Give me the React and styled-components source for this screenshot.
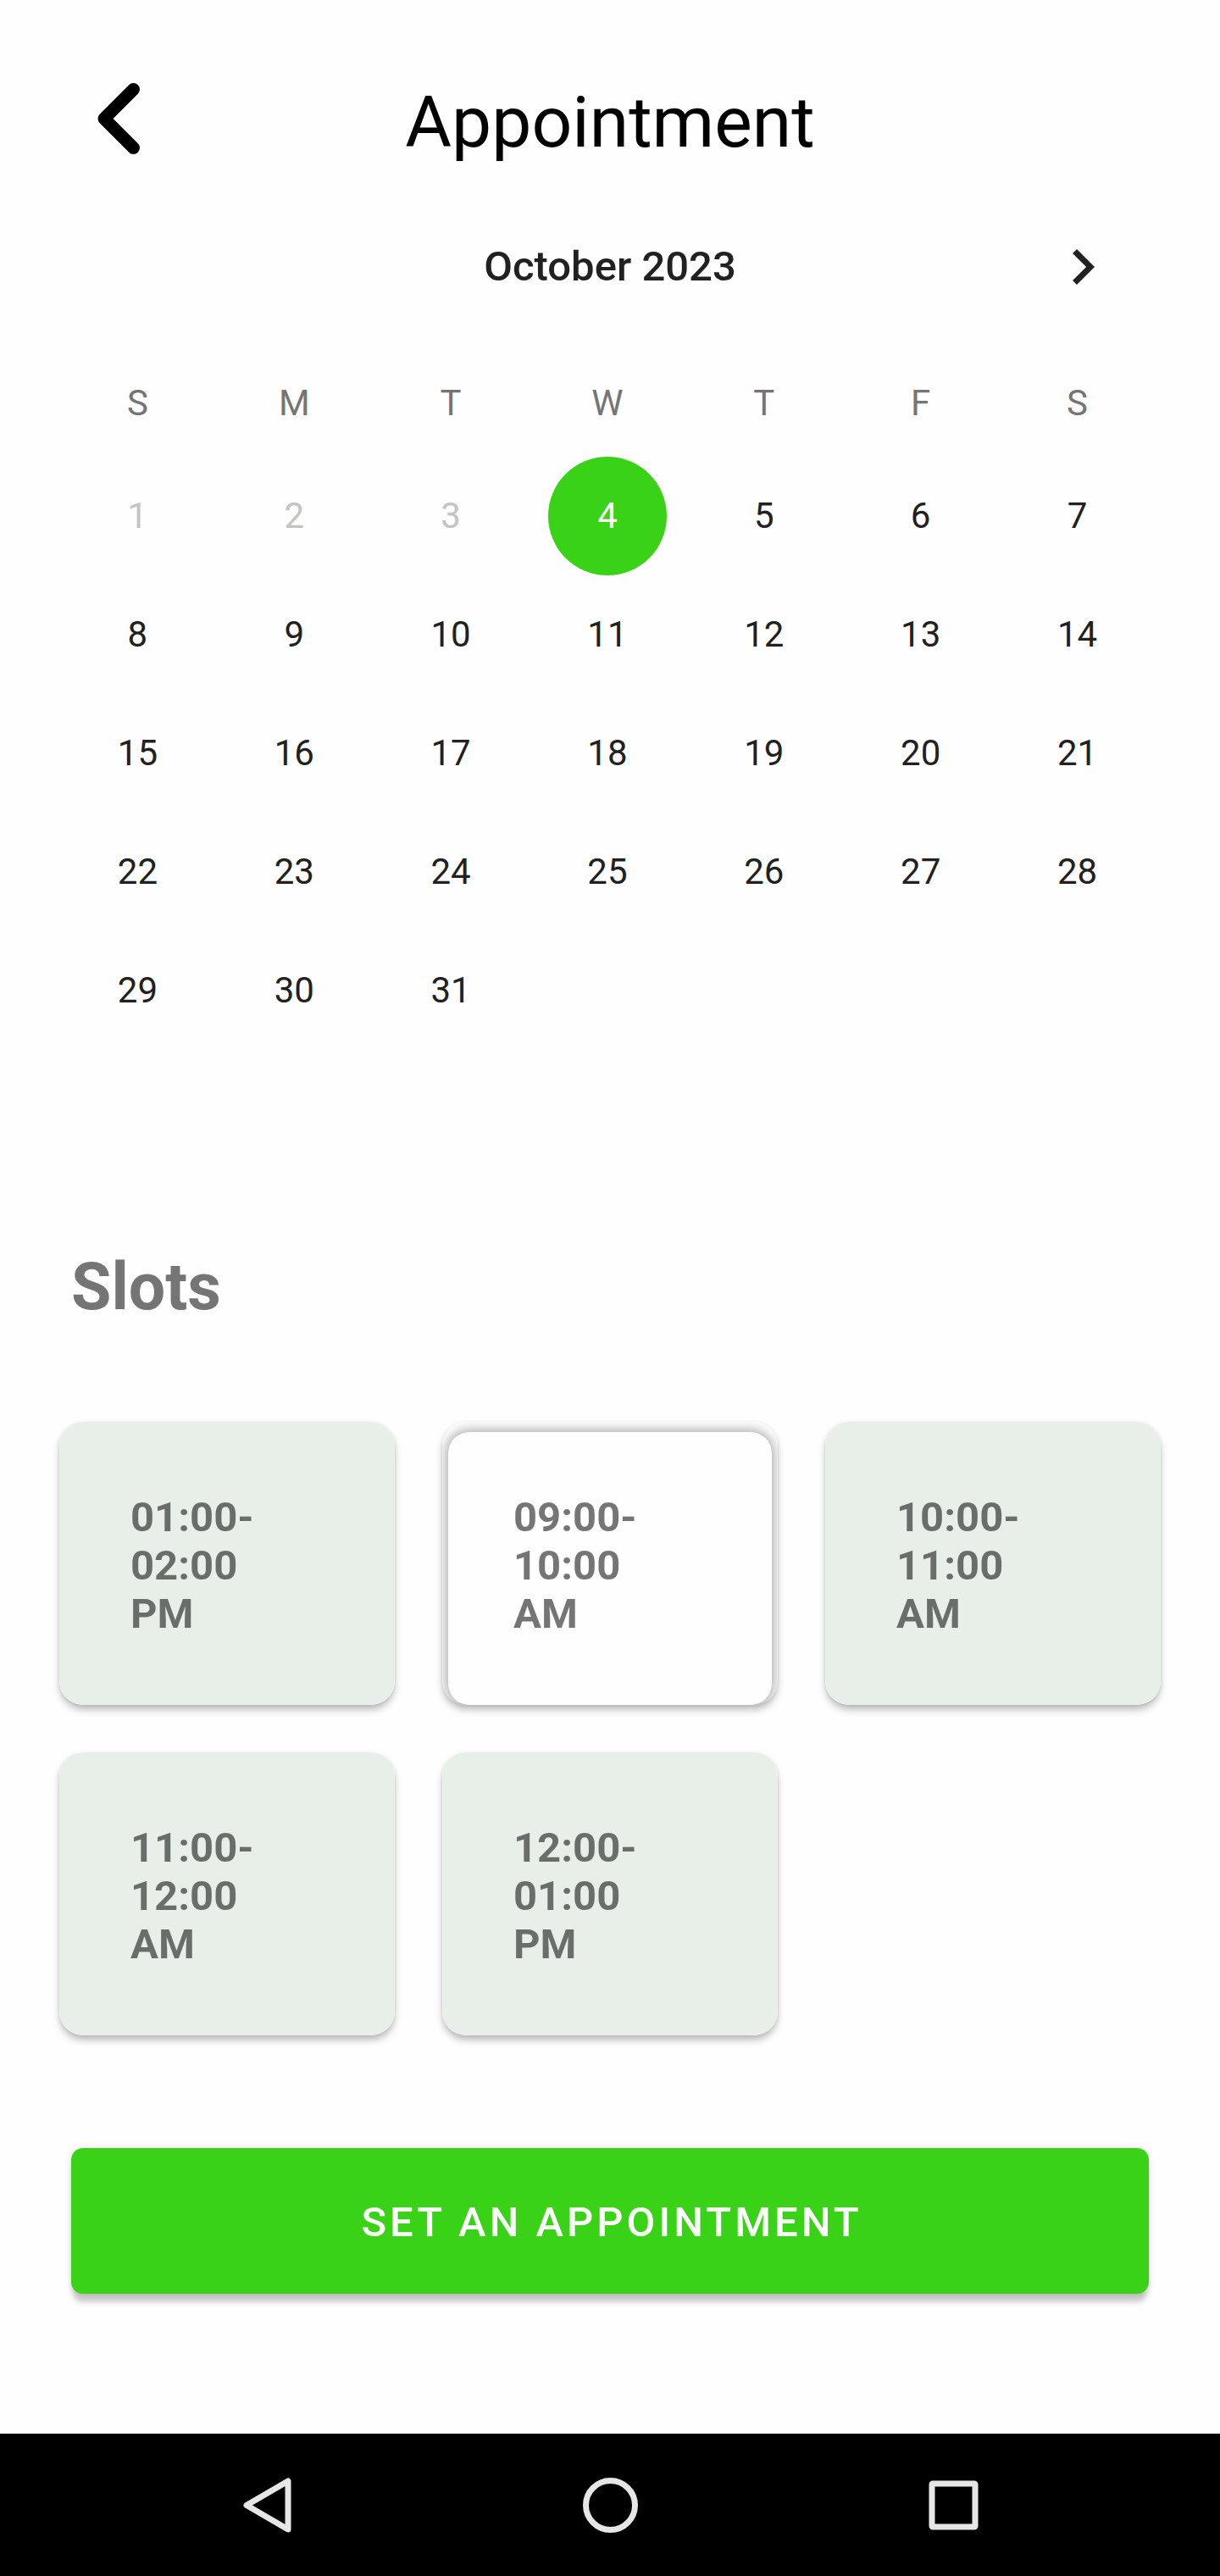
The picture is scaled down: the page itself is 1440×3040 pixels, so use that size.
import React, { useState } from "react";
import styled, { createGlobalStyle, css } from "styled-components";

const green = "#3ad216";
const ink = "#212121";
const muted = "rgba(0, 0, 0, 0.54)";

const GlobalStyle = createGlobalStyle`
  *, *::before, *::after { box-sizing: border-box; }
  body {
    margin: 0;
    background: #fefefe;
    font-family: Roboto, "Liberation Sans", sans-serif;
  }
  button {
    margin: 0;
    padding: 0;
    border: 0;
    background: none;
    color: inherit;
    font: inherit;
    cursor: pointer;
  }
`;

const Screen = styled.div`
  display: flex;
  flex-direction: column;
  min-height: 100vh;
`;

const Header = styled.header`
  display: grid;
  grid-template-columns: 112px 1fr 112px;
  align-items: end;
  padding: 84px 84px 0;
`;

const IconButton = styled.button`
  width: ${(p) => p.$size}px;
  height: ${(p) => p.$size}px;

  svg {
    display: block;
    width: 100%;
    height: 100%;
  }
`;

const Title = styled.h1`
  margin: 0;
  color: #000;
  font-size: 84px;
  font-weight: 400;
  line-height: 102px;
  text-align: center;
`;

const Calendar = styled.section`
  padding: 77px 76px 140px 70px;
`;

const MonthBar = styled.div`
  display: grid;
  grid-template-columns: 84px 1fr 84px;
  align-items: center;
  padding: 0 44px 0 50px;
  margin-bottom: 56px;
  color: ${ink};
`;

const MonthName = styled.h2`
  grid-column: 2;
  margin: 0;
  font-size: 49px;
  font-weight: 500;
  line-height: 84px;
  text-align: center;
`;

const MonthTable = styled.table`
  width: 100%;
  border-collapse: collapse;
  table-layout: fixed;
  font-size: 42px;
`;

const Weekday = styled.th`
  height: 126px;
  padding: 0 0 2px;
  color: #757575;
  font-weight: 400;
`;

const DayCell = styled.td`
  height: 140px;
  padding: 0;
  text-align: center;
`;

const Day = styled.button`
  display: block;
  width: 140px;
  height: 140px;
  margin: 0 auto;
  padding-bottom: 2px;
  border-radius: 50%;
  color: ${ink};

  &:disabled {
    color: #c4c4c4;
    cursor: default;
  }

  ${(p) =>
    p.$selected &&
    css`
      background: ${green};
      color: #fff;
    `}
`;

const SlotsTitle = styled.h2`
  margin: 95px 84px 114px;
  color: #757575;
  font-size: 77px;
  font-weight: 700;
  line-height: 90px;
`;

const SlotGrid = styled.div`
  display: grid;
  grid-template-columns: repeat(3, 1fr);
  gap: 56px;
  padding: 0 70px;
`;

const Slot = styled.button`
  display: flex;
  height: 334px;
  padding: ${(p) => (p.$selected ? "12px 7px 0" : "0")};
  border-radius: 28px;
  overflow: hidden;
  box-shadow: 0 6px 10px -1px rgba(0, 0, 0, 0.29), 0 0 4px rgba(0, 0, 0, 0.06);
`;

const SlotLabel = styled.span`
  flex: 1;
  align-self: stretch;
  padding: ${(p) => (p.$selected ? "72px 77px 0" : "84px 84px 0")};
  border-radius: ${(p) => (p.$selected ? "25px" : "28px")};
  background: ${(p) => (p.$selected ? "#fefefe" : "#e8efe8")};
  box-shadow: ${(p) => (p.$selected ? "0 0 12px 4px rgba(0, 0, 0, 0.28)" : "none")};
  color: ${muted};
  font-size: 49px;
  font-weight: 700;
  line-height: 57px;
  text-align: left;
  white-space: pre-line;
`;

const SubmitButton = styled.button`
  height: 172px;
  margin: 133px 84px 84px;
  padding: 2px 0 0 4px;
  border-radius: 14px;
  background: ${green};
  box-shadow: 0 12px 6px -2px rgba(0, 0, 0, 0.19), 0 2px 8px rgba(0, 0, 0, 0.12);
  color: #fff;
  font-size: 49px;
  font-weight: 500;
  letter-spacing: 4px;
  text-transform: uppercase;
`;

const SystemNav = styled.nav`
  display: flex;
  justify-content: space-between;
  align-items: center;
  height: 168px;
  margin-top: auto;
  padding: 0 259px;
  background: #000;
  color: #e6e6e6;
`;

const weekdays = ["S", "M", "T", "W", "T", "F", "S"];
const weeks = [0, 1, 2, 3, 4].map((week) =>
  weekdays.map((_, i) => week * 7 + i + 1)
);
const today = 4;
const lastDay = 31;

const slots = [
  "01:00-\n02:00\nPM",
  "09:00-\n10:00\nAM",
  "10:00-\n11:00\nAM",
  "11:00-\n12:00\nAM",
  "12:00-\n01:00\nPM",
];

export default function App() {
  const [day, setDay] = useState(today);
  const [slot, setSlot] = useState(1);

  return (
    <>
      <GlobalStyle />
      <Screen>
        <Header>
          <IconButton $size={112} aria-label="Back">
            <svg viewBox="0 0 112 112" fill="none" stroke="#000" strokeWidth="15" strokeLinecap="round" strokeLinejoin="round">
              <path d="M73.5 21.5 39 56l34.5 34.5" />
            </svg>
          </IconButton>
          <Title>Appointment</Title>
        </Header>

        <Calendar>
          <MonthBar>
            <MonthName>October 2023</MonthName>
            <IconButton $size={84} aria-label="Next month">
              <svg viewBox="0 0 24 24" fill="currentColor">
                <path d="M10 6 8.59 7.41 13.17 12l-4.58 4.59L10 18l6-6z" />
              </svg>
            </IconButton>
          </MonthBar>
          <MonthTable>
            <thead>
              <tr>
                {weekdays.map((name, i) => (
                  <Weekday key={i} scope="col">{name}</Weekday>
                ))}
              </tr>
            </thead>
            <tbody>
              {weeks.map((week) => (
                <tr key={week[0]}>
                  {week.map((n) => (
                    <DayCell key={n}>
                      {n <= lastDay && (
                        <Day
                          disabled={n < today}
                          $selected={n === day}
                          aria-pressed={n === day}
                          onClick={() => setDay(n)}
                        >
                          {n}
                        </Day>
                      )}
                    </DayCell>
                  ))}
                </tr>
              ))}
            </tbody>
          </MonthTable>
        </Calendar>

        <SlotsTitle>Slots</SlotsTitle>
        <SlotGrid>
          {slots.map((label, i) => (
            <Slot key={label} $selected={i === slot} aria-pressed={i === slot} onClick={() => setSlot(i)}>
              <SlotLabel $selected={i === slot}>{label}</SlotLabel>
            </Slot>
          ))}
        </SlotGrid>

        <SubmitButton>Set an appointment</SubmitButton>

        <SystemNav aria-label="System">
          <IconButton $size={112} aria-label="Back">
            <svg viewBox="0 0 112 112" fill="none" stroke="currentColor" strokeWidth="7" strokeLinejoin="round">
              <path d="M81 28V85L32 56.500z" />
            </svg>
          </IconButton>
          <IconButton $size={112} aria-label="Home">
            <svg viewBox="0 0 112 112" fill="none" stroke="currentColor" strokeWidth="7">
              <circle cx="56.500" cy="56.500" r="29" />
            </svg>
          </IconButton>
          <IconButton $size={112} aria-label="Overview">
            <svg viewBox="0 0 112 112" fill="none" stroke="currentColor" strokeWidth="7" strokeLinejoin="round">
              <rect x="31" y="31" width="51" height="51" rx="1" />
            </svg>
          </IconButton>
        </SystemNav>
      </Screen>
    </>
  );
}
